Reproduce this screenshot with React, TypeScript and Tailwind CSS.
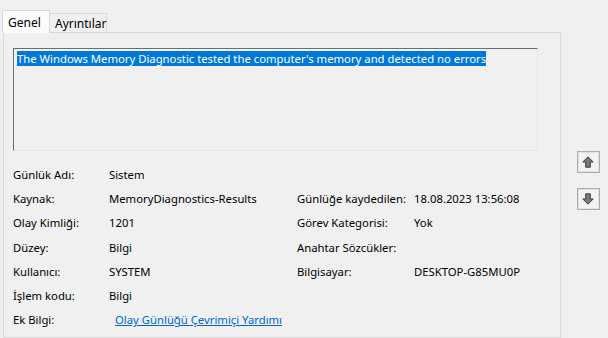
export default function App() {
  const font = { fontFamily: '"Segoe UI", "Noto Sans", "Open Sans", sans-serif' }
  return (
    <div
      className="w-[608px] h-[338px] overflow-hidden bg-[#f0f0f0] text-[11.3px] text-black flex"
      style={font}
    >
      {/* Left: tabs + panel */}
      <div className="w-[561px] pl-[3px] pt-[10px] flex flex-col">
        <div className="flex items-end h-[23px]">
          <div className="h-[23px] w-[48px] -ml-[1px] bg-[#fcfcfc] border border-b-0 border-[#d9d9d9] pl-[5px] pt-[3px] text-[12px] relative z-10">
            Genel
          </div>
          <div className="h-[20px] w-[57px] border border-l-0 border-b-0 border-[#d9d9d9] pl-[5px] pt-[1px] text-[12px] leading-[18px]">
            Ayrıntılar
          </div>
        </div>
        <div className="flex-1 -mt-[1px] border border-[#d9d9d9] bg-[#f0f0f0] px-[9px] pt-[15px]">
          {/* Description box */}
          <div className="w-[525px] h-[103px] border-t border-l border-t-[#6d6d6d] border-l-[#6d6d6d] border-r border-b border-r-[#e6e6e6] border-b-[#e6e6e6] pl-[3px] pt-[2px]">
            <span className="bg-[#0078d7] text-white leading-[15px] inline-block">
              The Windows Memory Diagnostic tested the computer's memory and detected no errors
            </span>
          </div>

          {/* Properties */}
          <div className="mt-[12px] grid grid-cols-[96px_188px_117px_1fr] auto-rows-[24.3px] items-center">
            <div>Günlük Adı:</div>
            <div>Sistem</div>
            <div />
            <div />

            <div>Kaynak:</div>
            <div>MemoryDiagnostics-Results</div>
            <div>Günlüğe kaydedilen:</div>
            <div>18.08.2023 13:56:08</div>

            <div>Olay Kimliği:</div>
            <div>1201</div>
            <div>Görev Kategorisi:</div>
            <div>Yok</div>

            <div>Düzey:</div>
            <div>Bilgi</div>
            <div>Anahtar Sözcükler:</div>
            <div />

            <div>Kullanıcı:</div>
            <div>SYSTEM</div>
            <div>Bilgisayar:</div>
            <div>DESKTOP-G85MU0P</div>

            <div>İşlem kodu:</div>
            <div>Bilgi</div>
            <div />
            <div />

            <div>Ek Bilgi:</div>
            <div className="pl-[6px]">
              <a href="#" className="text-[#0066cc] underline">
                Olay Günlüğü Çevrimiçi Yardımı
              </a>
            </div>
            <div />
            <div />
          </div>
        </div>
      </div>

      {/* Right: navigation buttons */}
      <div className="flex-1 flex flex-col items-center pt-[151px] pl-[7px] gap-[15px]">
        <NavButton dir="up" />
        <NavButton dir="down" />
      </div>
    </div>
  )
}

function NavButton({ dir }: { dir: 'up' | 'down' }) {
  return (
    <div className="w-[23px] h-[22px] border border-[#adadad] bg-[#e1e1e1] flex items-center justify-center">
      <div className="w-[19px] h-[18px] bg-[#f3f3f3] flex items-center justify-center">
        <svg width="12" height="12" viewBox="0 0 12 12" className={dir === 'down' ? 'rotate-180' : ''}>
          <path
            d="M6 0.8 L11.2 6 L8.3 6 L8.3 11.2 L3.7 11.2 L3.7 6 L0.8 6 Z"
            fill="#7a7a7a"
            stroke="#3c3c3c"
            strokeWidth="1"
            strokeLinejoin="round"
          />
        </svg>
      </div>
    </div>
  )
}
